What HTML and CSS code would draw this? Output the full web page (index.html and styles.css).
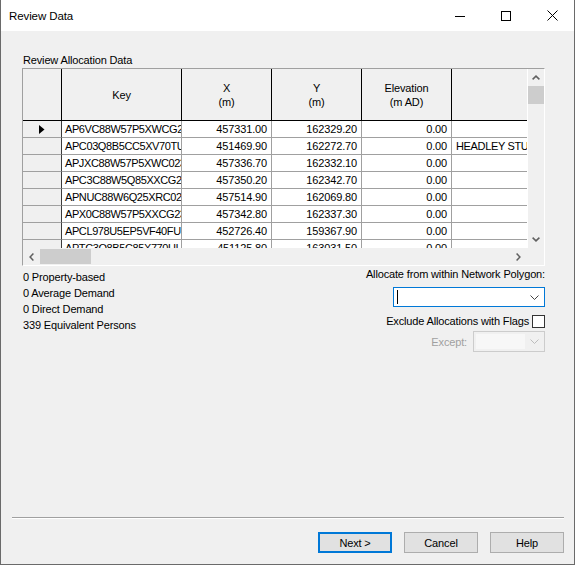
FILE: index.html
```html
<!DOCTYPE html>
<html lang="en">

<head>
    <meta charset="UTF-8">
    <meta name="viewport" content="width=device-width, initial-scale=1.0">
    <title>Review Data</title>

    <link rel="stylesheet" href="styles.css">
</head>

<body>
    <div class="window">
        <div class="titlebar">
            <span class="title">Review Data</span>
            <div class="caption-btns">
                <span class="cap-btn">
                    <svg width="10" height="10" viewBox="0 0 10 10"><path d="M0 5.5 H10" stroke="#000" stroke-width="1" /></svg>
                </span>
                <span class="cap-btn">
                    <svg width="10" height="10" viewBox="0 0 10 10"><rect x="0.5" y="0.5" width="9" height="9" fill="none" stroke="#000" stroke-width="1" /></svg>
                </span>
                <span class="cap-btn">
                    <svg width="11" height="11" viewBox="0 0 11 11"><path d="M0.5 0.5 L10.5 10.5 M10.5 0.5 L0.5 10.5" stroke="#000" stroke-width="1" /></svg>
                </span>
            </div>
        </div>

        <div class="dialog">
            <div class="main">
                <div class="group-label">Review Allocation Data</div>

                <div class="grid-box">
                    <div class="grid-top">
                        <div class="viewport">
                            <div class="grid" id="grid">
                                <div class="hcell"></div>
                                <div class="hcell">Key</div>
                                <div class="hcell">X<br>(m)</div>
                                <div class="hcell">Y<br>(m)</div>
                                <div class="hcell">Elevation<br>(m AD)</div>
                                <div class="hcell last"></div>
                            </div>
                        </div>
                        <div class="vscroll">
                            <div class="sb-btn">
                                <svg width="8" height="5" viewBox="0 0 8 5"><path d="M0.6 4.4 L4 1.1 L7.4 4.4" fill="none" stroke="#606060" stroke-width="1.5" /></svg>
                            </div>
                            <div class="vthumb"></div>
                            <div class="sb-fill"></div>
                            <div class="sb-btn">
                                <svg width="8" height="5" viewBox="0 0 8 5"><path d="M0.6 0.6 L4 3.9 L7.4 0.6" fill="none" stroke="#606060" stroke-width="1.5" /></svg>
                            </div>
                        </div>
                    </div>
                    <div class="grid-bottom">
                        <div class="hscroll">
                            <div class="sb-btn">
                                <svg width="5" height="8" viewBox="0 0 5 8"><path d="M4.4 0.6 L1.1 4 L4.4 7.4" fill="none" stroke="#606060" stroke-width="1.5" /></svg>
                            </div>
                            <div class="hthumb"></div>
                            <div class="sb-fill"></div>
                            <div class="sb-btn">
                                <svg width="5" height="8" viewBox="0 0 5 8"><path d="M0.6 0.6 L3.9 4 L0.6 7.4" fill="none" stroke="#606060" stroke-width="1.5" /></svg>
                            </div>
                        </div>
                        <div class="corner"></div>
                    </div>
                </div>

                <div class="info">
                    <div class="totals">
                        <div>0 Property-based</div>
                        <div>0 Average Demand</div>
                        <div>0 Direct Demand</div>
                        <div>339 Equivalent Persons</div>
                    </div>

                    <div class="options">
                        <div class="opt-label">Allocate from within Network Polygon:</div>
                        <div class="combo active">
                            <span class="caret"></span>
                            <svg class="chev" width="9" height="5" viewBox="0 0 9 5"><path d="M0.5 0.5 L4.5 4.5 L8.5 0.5" fill="none" stroke="#444" stroke-width="1" /></svg>
                        </div>
                        <div class="check-row">
                            <span>Exclude Allocations with Flags</span>
                            <span class="checkbox"></span>
                        </div>
                        <div class="except-row">
                            <span class="disabled-text">Except:</span>
                            <div class="combo disabled">
                                <span class="combo-field"></span>
                                <svg class="chev" width="9" height="5" viewBox="0 0 9 5"><path d="M0.5 0.5 L4.5 4.5 L8.5 0.5" fill="none" stroke="#bcbcbc" stroke-width="1" /></svg>
                            </div>
                        </div>
                    </div>
                </div>
            </div>

            <div class="separator"></div>

            <div class="buttons">
                <button class="default">Next &gt;</button>
                <button>Cancel</button>
                <button>Help</button>
            </div>
        </div>
    </div>

    <script>
        let grid = document.getElementById('grid');

        let rows = [
            ["AP6VC88W57P5XWCG2Q", "457331.00", "162329.20", "0.00", ""],
            ["APC03Q8B5CC5XV70TU", "451469.90", "162272.70", "0.00", "HEADLEY STUDIOS"],
            ["APJXC88W57P5XWC023", "457336.70", "162332.10", "0.00", ""],
            ["APC3C88W5Q85XXCG2Q", "457350.20", "162342.70", "0.00", ""],
            ["APNUC88W6Q25XRC02X", "457514.90", "162069.80", "0.00", ""],
            ["APX0C88W57P5XXCG23", "457342.80", "162337.30", "0.00", ""],
            ["APCL978U5EP5VF40FU", "452726.40", "159367.90", "0.00", ""],
            ["APTC3Q8B5C85X770UI", "451125.80", "163031.50", "0.00", ""]
        ];

        rows.forEach((row, i) => {
            let head = document.createElement('div');
            head.className = 'rcell';
            if (i == 0) {
                head.innerHTML = '<svg width="6" height="9" viewBox="0 0 6 9"><path d="M0 0 L5.5 4.5 L0 9 Z" fill="#000" /></svg>';
            }
            grid.appendChild(head);

            row.forEach((value, j) => {
                let cell = document.createElement('div');
                cell.className = 'cell';
                if (j == 0) cell.classList.add('key');
                else if (j == 4) cell.classList.add('text');
                else cell.classList.add('num');
                cell.textContent = value;
                grid.appendChild(cell);
            });
        });
    </script>
</body>

</html>
```

FILE: styles.css
```css
* {
    box-sizing: border-box;
}

body {
    margin: 0;
    font-family: "Liberation Sans", Arial, sans-serif;
    font-size: 11px;
    letter-spacing: -0.15px;
    color: #000;
}

.window {
    width: 575px;
    height: 565px;
    display: flex;
    flex-direction: column;
    background-color: #f0f0f0;
    border: 1px solid #6a6a6a;
    border-top: none;
}

.titlebar {
    height: 31px;
    display: flex;
    align-items: center;
    justify-content: space-between;
    background-color: #fff;
    padding-left: 8px;
}

.title {
    font-size: 11.5px;
    letter-spacing: -0.1px;
}

.caption-btns {
    display: flex;
    height: 100%;
    margin-right: -1px;
}

.cap-btn {
    width: 46px;
    display: flex;
    align-items: center;
    justify-content: center;
}

.dialog {
    flex: 1;
    display: flex;
    flex-direction: column;
}

.main {
    padding: 0 29px 0 21px;
}

.group-label {
    margin-top: 21px;
    padding-left: 1px;
    line-height: 16px;
}

/* data grid */

.grid-box {
    border-top: 1px solid #a0a0a0;
    border-left: 1px solid #a0a0a0;
    border-right: 1px solid #fff;
    border-bottom: 1px solid #fff;
}

.grid-top {
    display: flex;
    height: 179px;
}

.viewport {
    width: 504px;
    overflow: hidden;
    background-color: #fff;
}

.grid {
    display: grid;
    grid-template-columns: 39px 120px 90px 90px 90px 120px;
    grid-template-rows: 52px;
    grid-auto-rows: 17px;
}

.hcell {
    display: flex;
    align-items: center;
    justify-content: center;
    text-align: center;
    line-height: 14px;
    background-color: #f0f0f0;
    border-right: 1px solid #000;
    border-bottom: 1px solid #000;
}

.hcell.last {
    border-right: none;
}

.rcell {
    display: flex;
    align-items: center;
    justify-content: center;
    background-color: #f0f0f0;
    border-right: 1px solid #3c3c3c;
    border-bottom: 1px solid #a0a0a0;
}

.cell {
    line-height: 16px;
    white-space: nowrap;
    overflow: hidden;
    border-right: 1px solid #a0a0a0;
    border-bottom: 1px solid #a0a0a0;
}

.key {
    padding-left: 3px;
    letter-spacing: -0.4px;
}

.num {
    text-align: right;
    padding-right: 4px;
}

.text {
    padding-left: 4px;
    letter-spacing: -0.35px;
    border-right: none;
}

.vscroll {
    width: 17px;
    display: flex;
    flex-direction: column;
    border-left: 1px solid #fff;
    background-color: #f0f0f0;
}

.sb-btn {
    flex: none;
    width: 16px;
    height: 16px;
    display: flex;
    align-items: center;
    justify-content: center;
}

.hscroll .sb-btn {
    width: 17px;
}

.vscroll .sb-btn {
    height: 17px;
}

.vthumb {
    height: 18px;
    background-color: #cdcdcd;
}

.sb-fill {
    flex: 1;
}

.grid-bottom {
    display: flex;
    height: 17px;
}

.hscroll {
    width: 504px;
    display: flex;
    padding: 1px 0;
    background-color: #f0f0f0;
}

.hthumb {
    width: 51px;
    background-color: #cdcdcd;
}

.corner {
    flex: 1;
    background-color: #f0f0f0;
}

/* totals and options */

.info {
    display: flex;
    justify-content: space-between;
}

.totals {
    padding-top: 3px;
    padding-left: 1px;
    line-height: 16px;
}

.options {
    display: flex;
    flex-direction: column;
    align-items: flex-end;
}

.opt-label {
    line-height: 16px;
}

.combo {
    display: flex;
    align-items: center;
    position: relative;
    background-color: #fff;
}

.combo.active {
    width: 152px;
    height: 20px;
    margin-top: 5px;
    border: 1px solid #0078d7;
}

.caret {
    width: 1px;
    height: 14px;
    margin-left: 3px;
    background-color: #000;
}

.chev {
    position: absolute;
    right: 5px;
    top: 7px;
}

.check-row {
    display: flex;
    align-items: center;
    margin-top: 6px;
    line-height: 16px;
}

.checkbox {
    width: 13px;
    height: 13px;
    margin-left: 3px;
    background-color: #fff;
    border: 1px solid #333;
}

.except-row {
    display: flex;
    align-items: center;
    margin-top: 2px;
}

.disabled-text {
    color: #a0a0a0;
    margin-right: 6px;
}

.combo.disabled {
    width: 72px;
    height: 21px;
    padding: 2px;
    background-color: #f0f0f0;
    border: 1px solid #cccccc;
}

.combo-field {
    width: 49px;
    height: 15px;
    background-color: #f7f7f7;
}

.combo.disabled .chev {
    top: 7px;
}

/* footer */

.separator {
    margin: auto 10px 0 11px;
    border-top: 1px solid #a0a0a0;
    border-bottom: 1px solid #fff;
}

.buttons {
    display: flex;
    justify-content: flex-end;
    gap: 12px;
    padding: 13px 10px 11px 0;
}

button {
    width: 74px;
    height: 21px;
    padding: 0;
    font-family: "Liberation Sans", Arial, sans-serif;
    font-size: 11px;
    letter-spacing: -0.15px;
    color: #000;
    background-color: #e1e1e1;
    border: 1px solid #adadad;
}

button.default {
    border: 2px solid #0078d7;
}
```
